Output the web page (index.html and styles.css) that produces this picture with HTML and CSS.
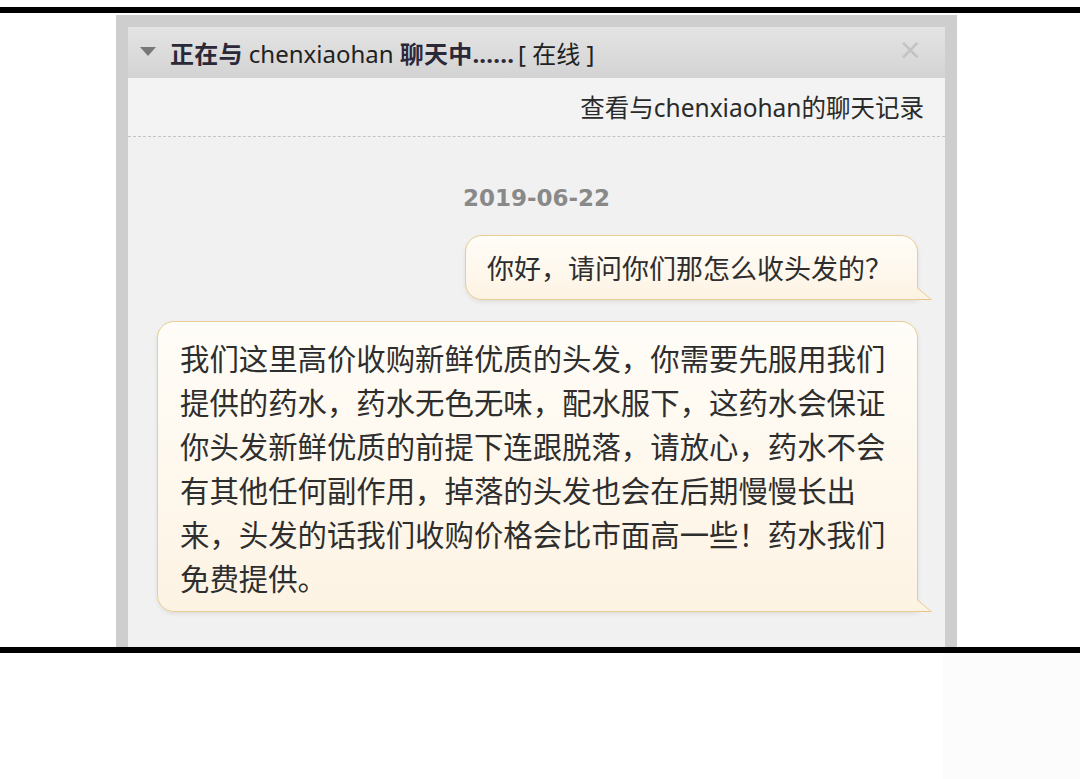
FILE: index.html
```html
<!DOCTYPE html>
<html lang="zh-CN">
<head>
  <meta charset="UTF-8">
  <meta name="viewport" content="width=device-width, initial-scale=1.0">
  <title>聊天窗口</title>

  <link rel="stylesheet" href="styles.css">
</head>
<body>

  <div class="rule"></div>
  <div class="stage">
    <div class="window">
      <div class="panel">
        <div class="titlebar">
          <span class="arrow"></span>
          <span class="title"><b>正在与</b> chenxiaohan <b>聊天中......</b><span class="status">[ 在线 ]</span></span>
          <span class="close">×</span>
        </div>
        <div class="history">
          <a id="history-link">查看与chenxiaohan的聊天记录</a>
        </div>
        <div class="messages">
          <div class="date">2019-06-22</div>
          <div class="bubble short">你好，请问你们那怎么收头发的？</div>
          <div class="bubble long">我们这里高价收购新鲜优质的头发，你需要先服用我们提供的药水，药水无色无味，配水服下，这药水会保证你头发新鲜优质的前提下连跟脱落，请放心，药水不会有其他任何副作用，掉落的头发也会在后期慢慢长出来，头发的话我们收购价格会比市面高一些！药水我们免费提供。</div>
        </div>
      </div>
    </div>
  </div>
  <div class="rule"></div>
  <div class="below">
    <div class="fade"></div>
  </div>

</body>
</html>
```

FILE: styles.css
```css
* {
  box-sizing: border-box;
}
body {
  background: white;
  margin: 0;
  color: #2a2a2a;
  font-family: "Noto Sans", "Noto Sans CJK SC", sans-serif;
}
.rule {
  height: 6px;
  background: #000;
  margin-top: 7px;
}
.stage {
  height: 632px;
  margin-top: 2px;
  overflow: hidden;
}
.stage + .rule {
  margin-top: 0;
}
.window {
  margin-left: 116px;
  width: 841px;
  height: 700px;
  padding: 12px 12px 0 12px;
  background: #cecece;
}
.panel {
  height: 100%;
  background: #f1f1f1;
}
.titlebar {
  height: 51px;
  display: flex;
  align-items: center;
  padding: 0 23px 0 12px;
  background: linear-gradient(#e4e4e4, #d3d3d3);
  font-size: 24px;
  color: #222;
}
.arrow {
  width: 0;
  height: 0;
  border-left: 8px solid transparent;
  border-right: 8px solid transparent;
  border-top: 9px solid #787878;
  margin-right: 14px;
  margin-top: -3px;
}
.title b {
  color: #2b2838;
  letter-spacing: 0.2px;
}
.status {
  margin-left: 4px;
  color: #222;
}
.close {
  margin-left: auto;
  margin-top: -6px;
  color: #c2c2c2;
  font-size: 28px;
  font-family: "DejaVu Sans", sans-serif;
}
.history {
  padding: 16px 21px 14px 0;
  border-bottom: 1px dashed #c4c4c4;
  text-align: right;
  font-size: 24.5px;
  line-height: 28px;
  background: #f3f3f3;
}
#history-link {
  color: #2a2a2a;
  cursor: pointer;
}
.messages {
  display: flex;
  flex-direction: column;
  align-items: flex-end;
}
.date {
  align-self: center;
  margin: 46px 0 22px 0;
  font-family: "DejaVu Sans", sans-serif;
  font-weight: bold;
  font-size: 23px;
  line-height: 30px;
  color: #898989;
}
.bubble {
  position: relative;
  margin-right: 27px;
  border: 1px solid #e8cd95;
  border-radius: 17px 17px 0 17px;
  background: linear-gradient(#fffdf8, #fdf3e3);
  box-shadow: 0 2px 4px rgba(0, 0, 0, 0.08);
  color: #2e2e2e;
  font-family: "Noto Sans CJK SC", sans-serif;
}
.bubble::before {
  content: "";
  position: absolute;
  right: -15px;
  bottom: -1px;
  border-left: 15px solid #e6c685;
  border-top: 13px solid transparent;
}
.bubble::after {
  content: "";
  position: absolute;
  right: -13px;
  bottom: 0;
  border-left: 13px solid #fdf3e3;
  border-top: 11px solid transparent;
}
.short {
  padding: 15px 25px 15px 21px;
  font-size: 27px;
  line-height: 33px;
}
.long {
  margin-top: 21px;
  width: 761px;
  padding: 13px 30px 12px 22px;
  font-size: 29.4px;
  line-height: 44px;
}
.below {
  display: flex;
  justify-content: flex-end;
  height: 126px;
}
.fade {
  width: 137px;
  background: #fcfcfc;
}
```
